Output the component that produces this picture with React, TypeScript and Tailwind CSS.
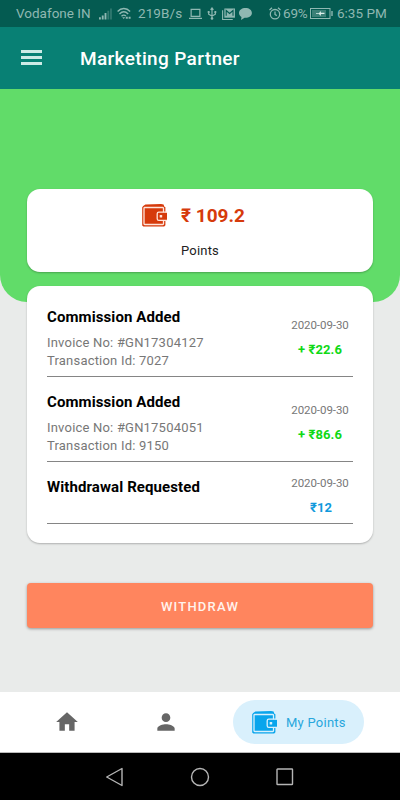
import type { ReactNode } from 'react';

type Transaction = {
  id: number;
  title: string;
  details: string[];
  date: string;
  amount: string;
  requested?: boolean;
};

// Points history
const transactions: Transaction[] = [
  {
    id: 1,
    title: 'Commission Added',
    details: ['Invoice No: #GN17304127', 'Transaction Id: 7027'],
    date: '2020-09-30',
    amount: '+ ₹22.6',
  },
  {
    id: 2,
    title: 'Commission Added',
    details: ['Invoice No: #GN17504051', 'Transaction Id: 9150'],
    date: '2020-09-30',
    amount: '+ ₹86.6',
  },
  {
    id: 3,
    title: 'Withdrawal Requested',
    details: [],
    date: '2020-09-30',
    amount: '₹12',
    requested: true,
  },
];

const WalletIcon = ({ line }: { line: string }) => (
  <svg width="25" height="23" viewBox="0 0 25 23" fill="none">
    <path d="M1.200 2 3.400.6 19 0l2.600.4.6 2 1.200.8v18l-1.200 1.400H1.400L.2 21.500V3.200z" fill="currentColor" />
    <path d="M21.500 8.500v-4.300a.7.7 0 0 0-.7-.7H2.700a.7.7 0 0 0-.7.7v15.600c0 .4.300.7.700.7h18.100c.4 0 .7-.3.7-.7V16" stroke={line} strokeWidth="1.300" />
    <path d="M25 8.500h-8.200a1.600 1.600 0 0 0-1.600 1.600v4.300a1.600 1.600 0 0 0 1.600 1.600H25z" fill="currentColor" />
    <path d="M25 8.200h-8.200a1.600 1.600 0 0 0-1.600 1.600v4.900a1.600 1.600 0 0 0 1.600 1.600H25" stroke={line} strokeWidth="1.300" />
    <rect x="17.700" y="11" width="2.500" height="2.500" rx=".5" fill={line} />
  </svg>
);

const StatusBar = () => (
  <div className="flex h-[27px] shrink-0 items-center bg-[#045b51] pl-4 text-[13.500px] leading-[27px] text-[#8fb8b2]">
    <span className="w-[74px]">Vodafone IN</span>
    <svg className="ml-[9px]" width="13" height="12" viewBox="0 0 14 12" fill="currentColor">
      <path d="M0 9.500h2V12H0zM3 7.500h2V12H3zM6 5h2v7H6z" />
      <path d="M9 2.500h2V12H9zM12 0h1.800v12H12z" opacity=".35" />
    </svg>
    <svg className="ml-[5px]" width="14" height="13" viewBox="0 0 14 13" fill="none" stroke="currentColor" strokeWidth="1.400">
      <path d="M.6 4.400C4.200.6 9.500.6 13.100 4.400M2.500 6.900c2.600-2.600 6-2.600 8.700 0M4.500 9.300c1.500-1.500 3-1.500 4.400-.2" />
      <path d="M5.200 10.300h3l-1.500 1.800zM8.800 9.800h2v2h-2zM11.600 9.800h2v2h-2z" fill="currentColor" stroke="none" />
    </svg>
    <span className="ml-[7px] w-[43px] tracking-[0.100px]">219B/s</span>
    <svg className="ml-[8px]" width="13" height="12" viewBox="0 0 14 12" fill="none" stroke="currentColor" strokeWidth="1.300">
      <path d="M2.300 1h9.400v7.600H2.300zM0 10.800h14" />
    </svg>
    <svg className="ml-[5px]" width="10" height="13" viewBox="0 0 10 14" fill="none" stroke="currentColor" strokeWidth="1.300">
      <path d="M5 12V1.500M3.500 3 5 1l1.500 2M1.400 5.500v2.300L5 9.800l3.600-2V5.300" />
      <circle cx="5" cy="12.400" r="1.400" fill="currentColor" stroke="none" />
      <path d="M.4 4.400h2v2h-2zM7.600 4.400h2v2h-2z" fill="currentColor" stroke="none" />
    </svg>
    <svg className="ml-[5px]" width="13" height="12" viewBox="0 0 14 13" fill="none" stroke="currentColor">
      <path d="M.6 2.500v10h11" strokeWidth="1.200" />
      <path d="M2.500.5H14v10H2.500z" fill="currentColor" stroke="none" />
      <path d="M4.500 8.500V2.800l3.700 3.200 3.700-3.200v5.700" stroke="#045b51" strokeWidth="1.200" />
    </svg>
    <svg className="ml-[4px]" width="13" height="12" viewBox="0 0 13 12" fill="currentColor">
      <path d="M6.500 0C2.900 0 0 2.100 0 4.900c0 1.700 1 3.100 2.500 4L2 12l3.600-2.300c4.200.3 7.300-1.900 7.300-4.800C12.900 2.100 10.100 0 6.500 0z" />
    </svg>
    <svg className="ml-[17px]" width="12" height="13" viewBox="0 0 12 13" fill="none" stroke="currentColor" strokeWidth="1.300">
      <circle cx="6" cy="7.200" r="4.700" />
      <path d="M6 4.500v3l1.800 1.100M.5 3 3 .8M11.500 3 9 .8" />
    </svg>
    <span className="ml-[2px] w-[25px] tracking-[-0.200px]">69%</span>
    <svg className="ml-[2px]" width="23" height="11" viewBox="0 0 23 11" fill="none">
      <rect x=".5" y=".5" width="19.500" height="10" stroke="currentColor" strokeWidth="1" />
      <path d="M2 2h14v7H2z" fill="currentColor" opacity=".4" />
      <path d="M21.300 3h1.400v5h-1.400z" fill="currentColor" />
      <path d="M6 5.200h3L10.500 3l.5 1.700h3.500v1.200H11L10.500 8 9 5.900H6z" fill="#dceeea" />
    </svg>
    <span className="ml-[4px]">6:35 PM</span>
  </div>
);

const Toolbar = () => (
  <header className="flex h-[62px] shrink-0 items-center bg-[#088074] pl-[21px]">
    <button aria-label="Open menu" className="flex w-[21px] flex-col gap-[3px] pb-px">
      <span className="h-[3px] bg-[#cdebe6]" />
      <span className="h-[3px] bg-[#cdebe6]" />
      <span className="h-[3px] bg-[#cdebe6]" />
    </button>
    <h1 className="ml-[38px] pt-px text-[19px] font-medium leading-6 tracking-[0.350px] text-white">Marketing Partner</h1>
  </header>
);

const Card = ({ className, children }: { className: string; children: ReactNode }) => (
  <section className={`rounded-[13px] bg-white shadow-[0_1px_2px_rgba(0,0,0,0.25)] ${className}`}>{children}</section>
);

const TransactionRow = ({ item }: { item: Transaction }) => (
  <li
    className={`flex justify-between border-b border-[#858585] pt-[15px] ${item.requested ? 'h-[62px]' : 'h-[85px]'}`}
  >
    <div>
      <h2 className="mb-[7px] text-[15px] font-bold leading-5 tracking-[0.100px] text-black">{item.title}</h2>
      {item.details.map((detail) => (
        <p key={detail} className="text-[13px] leading-[18px] tracking-[0.200px] text-[#777]">
          {detail}
        </p>
      ))}
    </div>
    <div className={`w-[66px] text-center ${item.requested ? '-mt-[2px]' : 'pt-[10px]'}`}>
      <p className="text-[11.500px] leading-4 tracking-[-0.050px] text-[#777]">{item.date}</p>
      <p
        className={`mt-[9px] text-[13px] font-bold leading-4 ${
          item.requested ? 'pl-[2px] text-[#1199dc]' : 'tracking-[0.100px] text-[#10d916]'
        }`}
      >
        {item.amount}
      </p>
    </div>
  </li>
);

const BottomNav = () => (
  <nav className="flex h-[61px] shrink-0 items-center border-b border-[#bbb] bg-white">
    <button aria-label="Home" className="ml-[54px]">
      <svg width="26" height="26" viewBox="0 0 24 24" fill="#666">
        <path d="M10 20v-6h4v6h5v-8h3L12 3 2 12h3v8z" />
      </svg>
    </button>
    <button aria-label="Profile" className="ml-[73px]">
      <svg width="26" height="26" viewBox="0 0 24 24" fill="#666">
        <path d="M12 12c2.210 0 4-1.790 4-4s-1.790-4-4-4-4 1.790-4 4 1.790 4 4 4zm0 2c-2.670 0-8 1.340-8 4v2h16v-2c0-2.660-5.330-4-8-4z" />
      </svg>
    </button>
    <button className="ml-[54px] flex h-11 w-[131px] items-center rounded-full bg-[#d9f0fc] pl-[19px] text-[#08a5ec]">
      <WalletIcon line="#d9f0fc" />
      <span className="ml-[9px] mt-[2px] text-[13px] tracking-[0.250px] text-[#28a7dc]">My Points</span>
    </button>
  </nav>
);

const SystemNav = () => (
  <div className="flex h-[47px] shrink-0 items-center bg-black pl-[105px]">
    <svg width="190" height="20" viewBox="0 0 190 20" fill="none" stroke="#b5b5b5" strokeWidth="1.400">
      <path d="M17 1.500v17L1.700 10z" strokeLinejoin="round" />
      <circle cx="95" cy="10" r="8.500" />
      <rect x="172" y="2" width="15.500" height="15.500" rx=".6" />
    </svg>
  </div>
);

const App = () => {
  return (
    <div className="flex h-[800px] w-[400px] flex-col overflow-hidden whitespace-nowrap bg-[#e9ebea] font-[Roboto,sans-serif]">
      <StatusBar />
      <Toolbar />

      <main className="flex-1">
        <div className="h-[213px] rounded-b-[27px] bg-[#61dc69] px-[27px] pt-[100px]">
          <Card className="flex h-[83px] flex-col items-center">
            <div className="mt-[14px] flex h-[25px] items-center pr-[13px] text-[#d63a0b]">
              <WalletIcon line="#ffe5dc" />
              <span className="ml-[14px] mt-[2px] text-[19px] font-bold">₹ 109.2</span>
            </div>
            <p className="mt-[13px] text-[13px] leading-5 tracking-[0.200px] text-[#222]">Points</p>
          </Card>
        </div>

        <Card className="relative mx-[27px] -mt-4 h-[257px] px-5 pt-[6px]">
          <ul>
            {transactions.map((item) => (
              <TransactionRow key={item.id} item={item} />
            ))}
          </ul>
        </Card>

        <div className="px-[27px] pt-[40px]">
          <button className="h-[45px] w-full rounded-[4px] bg-[#ff855e] pt-[2px] text-[13px] font-medium tracking-[1.200px] text-[#fff3ed] shadow-[0_1px_3px_rgba(0,0,0,0.35)]">
            WITHDRAW
          </button>
        </div>
      </main>

      <BottomNav />
      <SystemNav />
    </div>
  );
};

export default App;
